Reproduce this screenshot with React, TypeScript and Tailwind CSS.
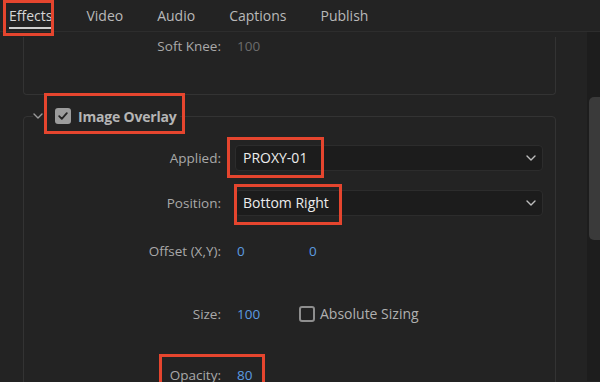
import type React from 'react';

const tabs = ['Effects', 'Video', 'Audio', 'Captions', 'Publish'];

const Chevron: React.FC<{ className?: string }> = ({ className }) => (
  <svg className={className} width="10" height="6" viewBox="0 0 10 6" fill="none">
    <path d="M1 1l4 4 4-4" stroke="currentColor" strokeWidth="1.4" strokeLinecap="round" strokeLinejoin="round" />
  </svg>
);

const Label: React.FC<{ children: React.ReactNode }> = ({ children }) => (
  <div className="w-[197px] shrink-0 text-right text-[#a9a9a9]">{children}</div>
);

const Select: React.FC<{ value: string }> = ({ value }) => (
  <div className="ml-[14px] flex h-[26px] flex-1 items-center justify-between rounded-[4px] border border-[#2c2c2c] bg-[#1c1c1c] pl-[7px] pr-[6px]">
    <span className="text-[14px] text-[#ececec]">{value}</span>
    <Chevron className="text-[#bdbdbd]" />
  </div>
);

const App: React.FC = () => {
  return (
    <div className="relative h-[382px] w-[600px] overflow-hidden bg-[#232323] font-['Open_Sans','Noto_Sans',sans-serif] text-[13.5px]">
      {/* Tab bar */}
      <nav className="flex h-[32px] gap-[34px] border-b border-[#2d2d2d] pl-[9px]">
        {tabs.map((t, i) => (
          <div key={t} className="pt-[6px]">
            <div className={`text-[14px] leading-[20px] ${i === 0 ? 'text-[#d6d6d6]' : 'text-[#b9b9b9]'}`}>{t}</div>
            {i === 0 && <div className="mt-[1px] h-[2px] bg-[#cfcfcf]" />}
          </div>
        ))}
      </nav>

      <div className="flex h-[349px]">
        {/* Content */}
        <div className="flex-1">
          {/* Upper (previous) panel */}
          <div className="ml-[23px] h-[58px] w-[533px] rounded-b-[4px] border-x border-b border-[#333333]">
            <div className="mt-[5px] flex leading-[18px]">
              <Label>Soft Knee:</Label>
              <div className="ml-[16px] text-[#6b6b6b]">100</div>
            </div>
          </div>

          {/* Image Overlay panel */}
          <fieldset className="ml-[23px] mt-[9px] h-[300px] w-[533px] rounded-[4px] border border-[#333333]">
            <legend className="ml-[9px] flex h-[24px] items-center pr-[4px]">
              <Chevron className="mr-[12px] text-[#9a9a9a]" />
              <span className="flex h-[16px] w-[16px] items-center justify-center rounded-[3px] bg-[#9c9c9c]">
                <svg width="10" height="8" viewBox="0 0 10 8" fill="none">
                  <path d="M1.2 4.2l2.6 2.6L8.8 1.2" stroke="#232323" strokeWidth="1.8" strokeLinecap="round" strokeLinejoin="round" />
                </svg>
              </span>
              <span className="ml-[7px] text-[14px] font-bold tracking-[-0.2px] text-[#b5b5b5]">Image Overlay</span>
            </legend>

            <div className="flex flex-col pr-[12px] leading-[18px]">
              <div className="mt-[17px] flex h-[26px] items-center">
                <Label>Applied:</Label>
                <Select value="PROXY-01" />
              </div>
              <div className="mt-[19px] flex h-[26px] items-center">
                <Label>Position:</Label>
                <Select value="Bottom Right" />
              </div>
              <div className="mt-[22px] flex h-[26px] items-center">
                <Label>Offset (X,Y):</Label>
                <div className="ml-[16px] w-[72px] text-[#5b9be0]">0</div>
                <div className="text-[#5b9be0]">0</div>
              </div>
              <div className="mt-[37px] flex h-[26px] items-center">
                <Label>Size:</Label>
                <div className="ml-[16px] w-[62px] text-[#5b9be0]">100</div>
                <span className="h-[16px] w-[16px] rounded-[3px] border-2 border-[#8e8e8e]" />
                <span className="ml-[5px] text-[14px] text-[#b0b0b0]">Absolute Sizing</span>
              </div>
              <div className="mt-[35px] flex h-[26px] items-center">
                <Label>Opacity:</Label>
                <div className="ml-[16px] text-[#5b9be0]">80</div>
              </div>
            </div>
          </fieldset>
        </div>

        {/* Scrollbar */}
        <div className="w-[13px] bg-[#1d1d1d] pl-[2px] pt-[65px]">
          <div className="h-[143px] rounded-l-[5px] bg-[#3a3a3a]" />
        </div>
      </div>

      {/* Annotation boxes */}
      <div className="absolute left-[3px] top-0 h-[36px] w-[51px] border-[3px] border-[#e5452e]" />
      <div className="absolute left-[44px] top-[93px] h-[41px] w-[141px] border-[3px] border-[#e5452e]" />
      <div className="absolute left-[227px] top-[137px] h-[41px] w-[97px] border-[3px] border-[#e5452e]" />
      <div className="absolute left-[234px] top-[184px] h-[41px] w-[108px] border-[3px] border-[#e5452e]" />
      <div className="absolute left-[159px] top-[354px] h-[40px] w-[106px] border-[3px] border-[#e5452e]" />
    </div>
  );
};

export default App;
